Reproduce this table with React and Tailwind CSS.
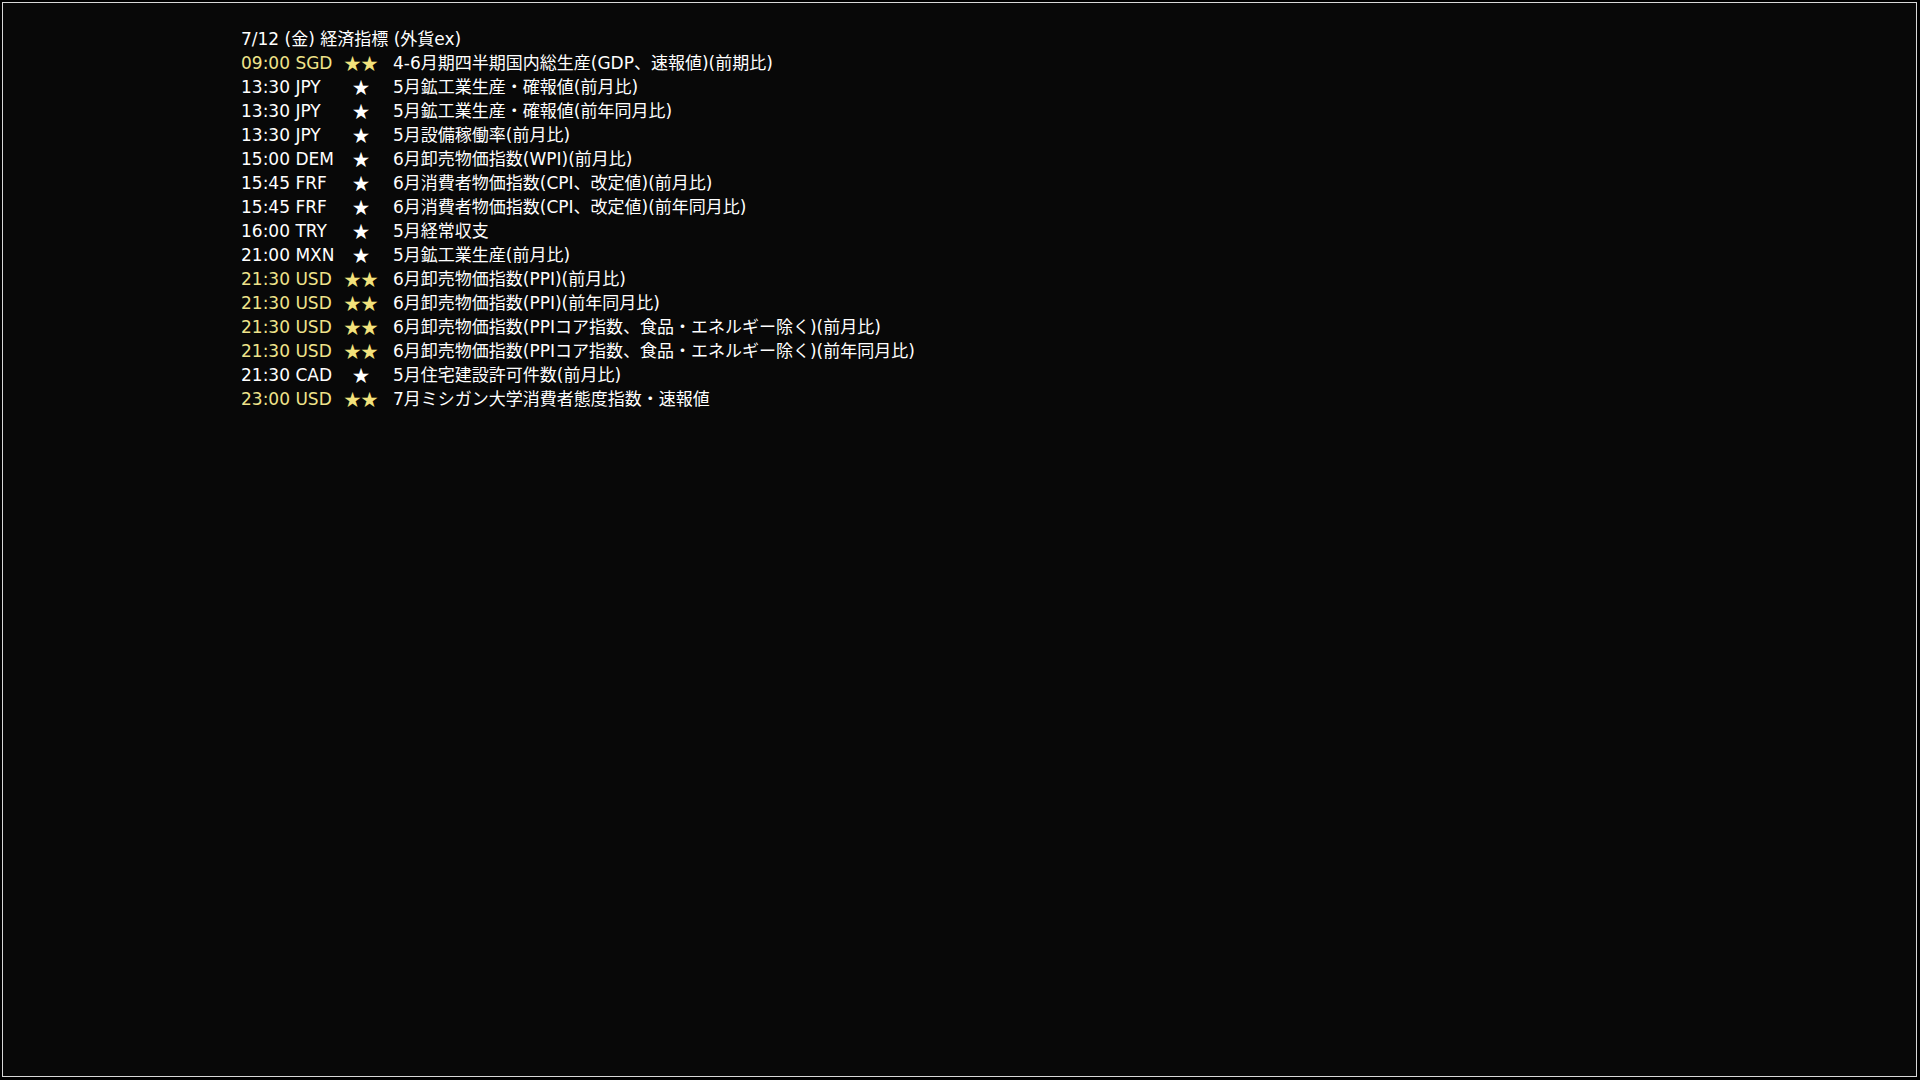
const rows = [
  { t: "09:00 SGD", s: 2, d: "4-6月期四半期国内総生産(GDP、速報値)(前期比)" },
  { t: "13:30 JPY", s: 1, d: "5月鉱工業生産・確報値(前月比)" },
  { t: "13:30 JPY", s: 1, d: "5月鉱工業生産・確報値(前年同月比)" },
  { t: "13:30 JPY", s: 1, d: "5月設備稼働率(前月比)" },
  { t: "15:00 DEM", s: 1, d: "6月卸売物価指数(WPI)(前月比)" },
  { t: "15:45 FRF", s: 1, d: "6月消費者物価指数(CPI、改定値)(前月比)" },
  { t: "15:45 FRF", s: 1, d: "6月消費者物価指数(CPI、改定値)(前年同月比)" },
  { t: "16:00 TRY", s: 1, d: "5月経常収支" },
  { t: "21:00 MXN", s: 1, d: "5月鉱工業生産(前月比)" },
  { t: "21:30 USD", s: 2, d: "6月卸売物価指数(PPI)(前月比)" },
  { t: "21:30 USD", s: 2, d: "6月卸売物価指数(PPI)(前年同月比)" },
  { t: "21:30 USD", s: 2, d: "6月卸売物価指数(PPIコア指数、食品・エネルギー除く)(前月比)" },
  { t: "21:30 USD", s: 2, d: "6月卸売物価指数(PPIコア指数、食品・エネルギー除く)(前年同月比)" },
  { t: "21:30 CAD", s: 1, d: "5月住宅建設許可件数(前月比)" },
  { t: "23:00 USD", s: 2, d: "7月ミシガン大学消費者態度指数・速報値" },
];

export default function App() {
  return (
    <div className="w-[1920px] h-[1080px] bg-black pl-[2px] pt-[2px] pr-[3px] pb-[3px]">
      <div
        className="w-full h-full border border-[#d8d8d8] bg-[#080808] pt-[24px] pl-[238px] text-white text-[17px] leading-[24px]"
        style={{ fontFamily: '"DejaVu Sans", "Noto Sans CJK JP", sans-serif' }}
      >
        <div className="whitespace-pre">7/12 (金) 経済指標 (外貨ex)</div>
        {rows.map((r, i) => (
          <div key={i} className="flex">
            <div className={"w-[96px] whitespace-pre " + (r.s === 2 ? "text-[#efe38a]" : "text-white")}>{r.t}</div>
            <div
              className={"w-[48px] text-center " + (r.s === 2 ? "text-[#f3e27c]" : "text-white")}
              style={{ fontFamily: '"Noto Sans CJK JP", sans-serif' }}
            >
              {r.s === 2 ? "★★" : "★"}
            </div>
            <div className="pl-[8px] text-white">{r.d}</div>
          </div>
        ))}
      </div>
    </div>
  );
}
